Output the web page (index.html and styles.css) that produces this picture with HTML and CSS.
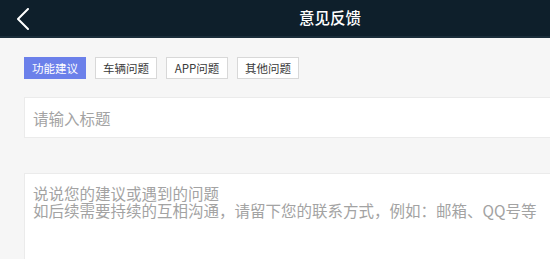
FILE: index.html
```html
<!DOCTYPE html>
<html lang="zh-CN">
<head>
    <meta charset="UTF-8">
    <title>意见反馈</title>
    <link rel="stylesheet" href="styles.css">
</head>
<body>
    <div class="top-bar">
        <a class="back" href="#">
            <svg width="12" height="22" viewBox="0 0 12 22">
                <polyline points="11,1 1,11 11,21" fill="none" stroke="#ffffff" stroke-width="2" stroke-linecap="round" stroke-linejoin="round"/>
            </svg>
        </a>
        <h1>意见反馈</h1>
    </div>

    <div class="feedback">
        <div class="tabs">
            <span class="tab active">功能建议</span>
            <span class="tab">车辆问题</span>
            <span class="tab">APP问题</span>
            <span class="tab">其他问题</span>
        </div>

        <input class="title-input" type="text" placeholder="请输入标题">

        <textarea class="content-input" placeholder="说说您的建议或遇到的问题&#10;如后续需要持续的互相沟通，请留下您的联系方式，例如：邮箱、QQ号等"></textarea>
    </div>
</body>
</html>
```

FILE: styles.css
```css
body {
    margin: 0;
    background-color: #f6f6f6;
    font-family: "Noto Sans CJK SC", sans-serif;
    color: #444;
}
.top-bar {
    height: 36px;
    background-color: #0e1f2b;
    border-bottom: 2px solid #1a2d3a;
    display: flex;
    align-items: center;
    padding-left: 17px;
}
.back {
    display: flex;
    margin-top: 1px;
}
.top-bar h1 {
    margin: 0 0 0 270px;
    font-size: 15.5px;
    font-weight: 500;
    color: #ffffff;
    line-height: 1;
}
.feedback {
    padding: 19px 0 0 24px;
}
.tabs {
    display: flex;
    gap: 9px;
}
.tab {
    width: 62px;
    height: 22px;
    box-sizing: border-box;
    border: 1px solid #d8d8d8;
    background-color: #fff;
    font-size: 11.5px;
    line-height: 20px;
    text-align: center;
    color: #3a3a3a;
}
.tab.active {
    background-color: #6b80ea;
    border-color: #6b80ea;
    color: #fff;
}
.title-input, .content-input {
    display: block;
    width: 100%;
    box-sizing: border-box;
    border: 1px solid #ebebeb;
    border-right: none;
    background-color: #fff;
    font-family: inherit;
    font-size: 15.5px;
    color: #444;
    outline: none;
}
.title-input {
    margin-top: 18px;
    height: 41px;
    padding: 0 8px;
}
.content-input {
    margin-top: 35px;
    height: 86px;
    border-bottom: none;
    padding: 11px 8px;
    line-height: 17px;
    resize: none;
}
.title-input::placeholder, .content-input::placeholder {
    color: #a3a3a3;
}
```
